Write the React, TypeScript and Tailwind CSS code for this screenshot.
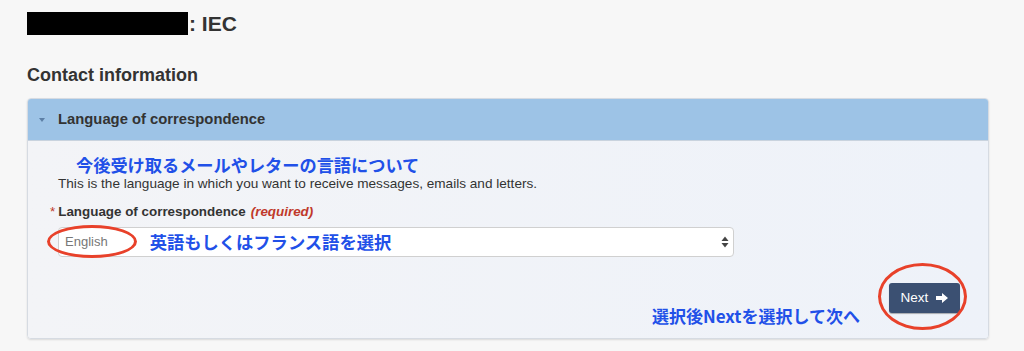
import React from "react"

const jp = { fontFamily: '"Noto Sans CJK JP", "Liberation Sans", sans-serif' }
const sans = { fontFamily: '"Liberation Sans", Arial, sans-serif' }

function Ellipse({ className }: { className: string }) {
  return <span className={`pointer-events-none absolute rounded-[50%] border-[3px] border-[#e8412a] ${className}`} />
}

export default function App() {
  return (
    <div className="min-h-[351px] w-[1024px] bg-[#f7f7f7] pl-[27px] pr-[35px] pt-[12px] text-[#333]" style={sans}>
      {/* page title, name redacted */}
      <div className="flex h-[23px] items-center">
        <span className="h-[23px] w-[161px] bg-black" />
        <span className="ml-[1px] text-[21px] font-bold leading-none text-[#333]">: IEC</span>
      </div>

      <h3 className="mt-[29px] text-[18px] font-bold leading-[22px] text-[#333]">Contact information</h3>

      {/* panel */}
      <div className="mt-[12px] overflow-hidden rounded-[4px] border border-[#d6dbe2] shadow-[0_1px_2px_rgba(0,0,0,0.12)]">
        <div className="flex h-[42px] items-center border-b border-[#c9d3de] bg-[#9dc3e6] pl-[11px]">
          <span className="mr-[13px] inline-block h-0 w-0 border-x-[3.5px] border-t-[4px] border-x-transparent border-t-[#5d7fa6]" />
          <span className="text-[14.8px] font-bold text-[#333]">Language of correspondence</span>
        </div>

        <div className="bg-gradient-to-r from-[#f3f4f7] to-[#eef2f9] pl-[30px] pr-[28px] pt-[14px]">
          <div className="ml-[18px] text-[17.2px] font-bold leading-[20px] text-[#2150e8]" style={jp}>
            今後受け取るメールやレターの言語について
          </div>
          <p className="mt-[1px] text-[13.6px] leading-[16px] text-[#333]">
            This is the language in which you want to receive messages, emails and letters.
          </p>

          <div className="mt-[12px] flex items-center text-[13.4px] leading-[16px]">
            <span className="-ml-[8px] mr-[3px] text-[#c0392b]">*</span>
            <span className="font-bold text-[#333]">Language of correspondence</span>
            <span className="ml-[5px] font-bold italic text-[#c0392b]">(required)</span>
          </div>

          {/* select */}
          <div className="relative mt-[7px] flex h-[30px] w-[676px] items-center rounded-[4px] border border-[#d0d0d0] bg-white pl-[6px] pr-[4px]">
            <span className="text-[13px] text-[#777]">English</span>
            <span className="ml-[42px] text-[17.3px] font-bold leading-[20px] text-[#2150e8]" style={jp}>
              英語もしくはフランス語を選択
            </span>
            <svg className="ml-auto" width="8" height="12" viewBox="0 0 8 12">
              <path d="M4 0.5 L7.5 5 H0.5 Z" fill="#444" />
              <path d="M4 11.5 L7.5 7 H0.5 Z" fill="#444" />
            </svg>
            <Ellipse className="-left-[12px] -top-[3px] h-[33px] w-[90px]" />
          </div>

          {/* footer row */}
          <div className="flex items-start justify-end pb-[12px] pt-[26px]">
            <span className="mr-[29px] mt-[23px] text-[17px] font-bold leading-[20px] text-[#2150e8]" style={jp}>
              選択後Nextを選択して次へ
            </span>
            <div className="relative">
              <button className="flex h-[30px] w-[71px] items-center justify-center gap-[8px] rounded-[3px] bg-[#3b5072] text-[13.5px] text-white shadow-[0_1px_1px_rgba(0,0,0,0.3)]">
                Next
                <svg width="12" height="10" viewBox="0 0 12 10">
                  <path d="M0 3 H6 V0 L12 5 L6 10 V7 H0 Z" fill="#fff" />
                </svg>
              </button>
              <Ellipse className="-left-[11px] -top-[20px] h-[67px] w-[89px]" />
            </div>
          </div>
        </div>
      </div>
    </div>
  )
}
